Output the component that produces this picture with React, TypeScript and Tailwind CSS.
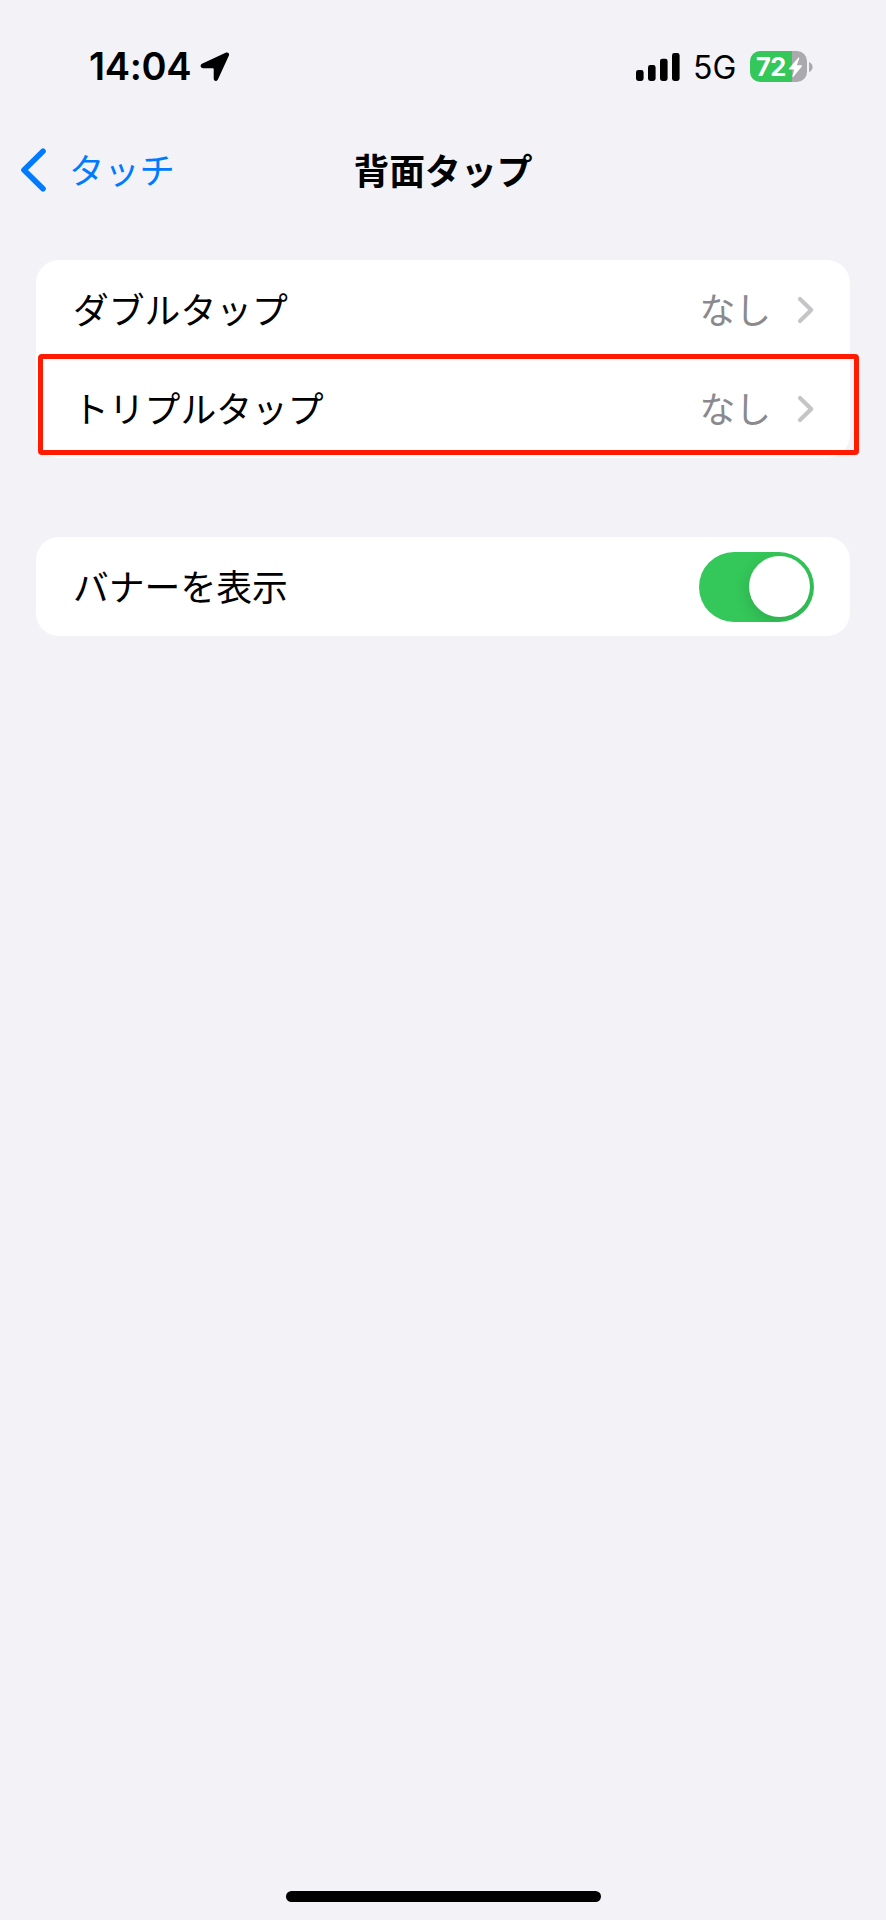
function Chevron() {
  return (
    <svg className="ml-[26px] h-[28px] w-[18px] shrink-0" viewBox="0 0 18 28" fill="none">
      <path d="M3 3L14.2 14L3 25" stroke="#c5c5c7" strokeWidth="4.2" strokeLinecap="round" strokeLinejoin="round" />
    </svg>
  );
}

function Row({ label, value }: { label: string; value: string }) {
  return (
    <div className="flex h-[99px] items-center pr-[35px] pl-[37px]">
      <span className="flex-1 pb-[4px]">{label}</span>
      <span className="pb-[4px] text-[#8a8a8e]">{value}</span>
      <Chevron />
    </div>
  );
}

function StatusBar() {
  return (
    <div className="flex h-[132px] items-start justify-between pt-[46px] pr-[73px] pl-[89px] font-['Inter',sans-serif]">
      <div className="flex h-[41px] items-center">
        <span className="w-[111px] text-[38px] leading-[41px] font-semibold tracking-[-0.3px]">14:04</span>
        <svg className="h-[30px] w-[30px]" viewBox="0 0 30 30">
          <path
            d="M2.5 11.6L25.6 0.8C28.1-.2 29.8 1.3 28.8 3.8L18 27.2C16.9 29.9 13.7 29.4 13.7 26.6V17.1C13.7 16.6 13.4 16.3 12.9 16.3H3.3C.3 16.3-.5 12.9 2.5 11.6Z"
            fill="#000"
          />
        </svg>
      </div>
      <div className="flex h-[41px] items-center">
        <svg className="h-[28px] w-[44px]" viewBox="0 0 44 28">
          <rect x="0" y="17" width="7.6" height="11" rx="2.4" />
          <rect x="12" y="12" width="7.6" height="16" rx="2.4" />
          <rect x="24" y="5.7" width="7.6" height="22.3" rx="2.4" />
          <rect x="36" y="0" width="7.6" height="28" rx="2.4" />
        </svg>
        <span className="ml-[13px] w-[57px] pt-[2px] text-[32px] leading-[41px]">5G</span>
        <div className="relative flex h-[31px] w-[57px] items-center overflow-hidden rounded-[10px] bg-[linear-gradient(to_right,#34c759_73%,#a9a9ae_73%)] pl-[6px]">
          <span className="text-[25.5px] leading-[31px] font-bold tracking-[-0.5px] text-white">72</span>
          <svg className="absolute top-[6px] left-[38px] h-[21px] w-[15px]" viewBox="0 0 15 21">
            <path d="M10.4 .6L1 11.6Q.5 12.4 1.4 12.4H6.3L4.4 19.4Q4.4 20.6 5.4 19.8L14 9.2Q14.4 8.3 13.5 8.3H8.8L11.3 1.4Q11.4 0 10.4 .6Z" fill="#fff" />
          </svg>
        </div>
        <svg className="ml-[2px] h-[10px] w-[4px]" viewBox="0 0 4 10">
          <path d="M0 0Q3.6 1.5 3.6 5Q3.6 8.5 0 10Z" fill="#a9a9ae" />
        </svg>
      </div>
    </div>
  );
}

export default function App() {
  return (
    <div className="flex h-[1920px] w-[886px] flex-col bg-[#f2f2f7] font-['Noto_Sans_CJK_JP',sans-serif] text-[35.8px] leading-[50px] text-black">
      <StatusBar />
      <header className="grid h-[76px] grid-cols-[1fr_auto_1fr] items-center">
        <button className="flex items-center pl-[20px] text-left text-[#007aff]">
          <svg className="h-[44px] w-[27px]" viewBox="0 0 27 44" fill="none">
            <path d="M23 3.3L4 22L23 40.7" stroke="#007aff" strokeWidth="5.6" strokeLinecap="round" strokeLinejoin="round" />
          </svg>
          <span className="ml-[22px] pb-[2px] text-[35.3px]">タッチ</span>
        </button>
        <h1 className="pb-[2px] font-bold">背面タップ</h1>
      </header>
      <main className="flex flex-1 flex-col pt-[52px] pr-[36px] pl-[36px]">
        <section className="relative rounded-[23px] bg-white">
          <Row label="ダブルタップ" value="なし" />
          <Row label="トリプルタップ" value="なし" />
          <div className="absolute top-[94px] -right-[9px] left-[1.5px] h-[101px] rounded-[4px] border-5 border-[#ff1a00]" />
        </section>
        <section className="mt-[79px] flex h-[99px] items-center rounded-[23px] bg-white pr-[36px] pl-[37px]">
          <span className="flex-1 pb-[3px]">バナーを表示</span>
          <div className="flex h-[70px] w-[115px] items-center justify-end overflow-hidden rounded-full bg-[#34c759] pr-[4.5px]">
            <div className="size-[61px] rounded-full bg-white shadow-[0_5px_16px_rgba(0,0,0,0.14)]" />
          </div>
        </section>
      </main>
      <div className="mb-[18px] h-[11.5px] w-[315px] self-center rounded-full bg-black" />
    </div>
  );
}
